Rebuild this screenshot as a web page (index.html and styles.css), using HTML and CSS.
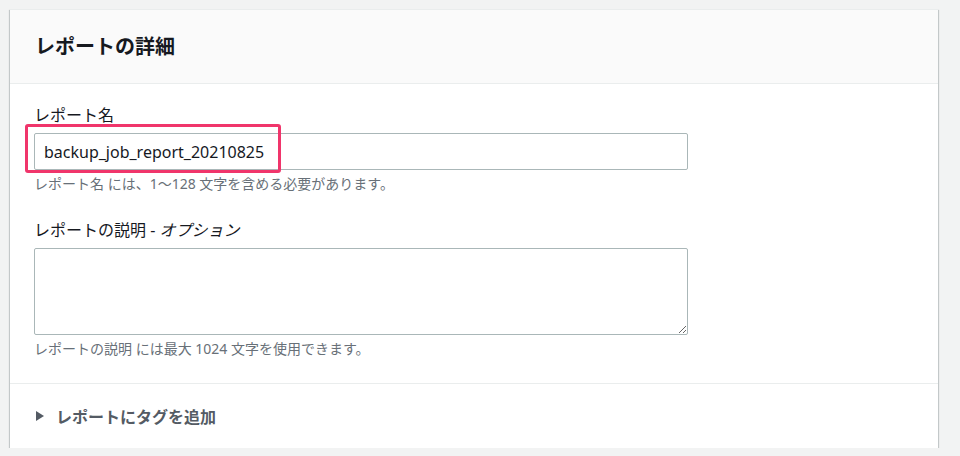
FILE: index.html
```html
<!DOCTYPE html>
<html lang="ja">
<head>
  <meta charset="UTF-8">
  <meta name="viewport" content="width=device-width, initial-scale=1.0">
  <title>レポートの詳細</title>
  <link rel="stylesheet" href="styles.css">
</head>
<body>
  <div class="panel">
    <div class="panel-header">
      <h2>レポートの詳細</h2>
    </div>

    <div class="panel-body">
      <div class="field">
        <label for="reportName">レポート名</label>
        <div class="input-wrap">
          <input type="text" id="reportName" value="backup_job_report_20210825">
          <span class="highlight"></span>
        </div>
        <p class="hint">レポート名 には、1〜128 文字を含める必要があります。</p>
      </div>

      <div class="field">
        <label for="reportDesc">レポートの説明 - <i>オプション</i></label>
        <textarea id="reportDesc"></textarea>
        <p class="hint">レポートの説明 には最大 1024 文字を使用できます。</p>
      </div>
    </div>

    <div class="panel-footer">
      <svg class="caret" width="10" height="12" viewBox="0 0 10 12"><polygon points="1,1 9,6 1,11" fill="#545b64"/></svg>
      <span>レポートにタグを追加</span>
    </div>
  </div>
</body>
</html>
```

FILE: styles.css
```css
body {
  margin: 0;
  background: #f2f3f3;
  font-family: "Noto Sans", "Noto Sans CJK JP", sans-serif;
  color: #16191f;
}
.panel {
  margin: 9px 0 0 10px;
  width: 928px;
  background: #ffffff;
  border-top: 1px solid #eaeded;
  box-shadow: 0 1px 1px 0 rgba(0, 28, 36, 0.3), 1px 1px 1px 0 rgba(0, 28, 36, 0.15), -1px 1px 1px 0 rgba(0, 28, 36, 0.15);
}
.panel-header {
  background: #fafafa;
  border-bottom: 1px solid #eaeded;
  height: 73px;
  display: flex;
  align-items: center;
  padding-left: 25px;
}
h2 {
  margin: 0;
  font-size: 20px;
  font-weight: bold;
  line-height: 28px;
}
.panel-body {
  padding: 21px 24px 25px;
  border-bottom: 1px solid #eaeded;
}
.field + .field {
  margin-top: 27px;
}
label {
  display: block;
  font-size: 16px;
  line-height: 20px;
  margin-bottom: 8px;
}
label i {
  font-style: italic;
  font-weight: normal;
}
.input-wrap {
  position: relative;
  width: 654px;
}
input, textarea {
  display: block;
  width: 654px;
  box-sizing: border-box;
  border: 1px solid #aab7b8;
  border-radius: 2px;
  font-family: "Noto Sans", "Noto Sans CJK JP", sans-serif;
  font-size: 16px;
  color: #16191f;
  background: #ffffff;
}
input {
  height: 37px;
  padding: 0 9px;
}
textarea {
  height: 87px;
  padding: 6px 9px;
  resize: both;
}
.highlight {
  position: absolute;
  left: -9px;
  top: -9px;
  width: 256px;
  height: 49px;
  border: 3px solid #f0356b;
  border-radius: 3px;
  box-sizing: border-box;
  pointer-events: none;
}
.hint {
  margin: 5px 0 0;
  font-size: 14px;
  line-height: 18px;
  color: #687078;
}
.panel-footer {
  height: 64px;
  display: flex;
  align-items: center;
  padding-left: 25px;
  font-size: 16px;
  font-weight: bold;
  color: #545b64;
}
.caret {
  margin-right: 11px;
}
```
